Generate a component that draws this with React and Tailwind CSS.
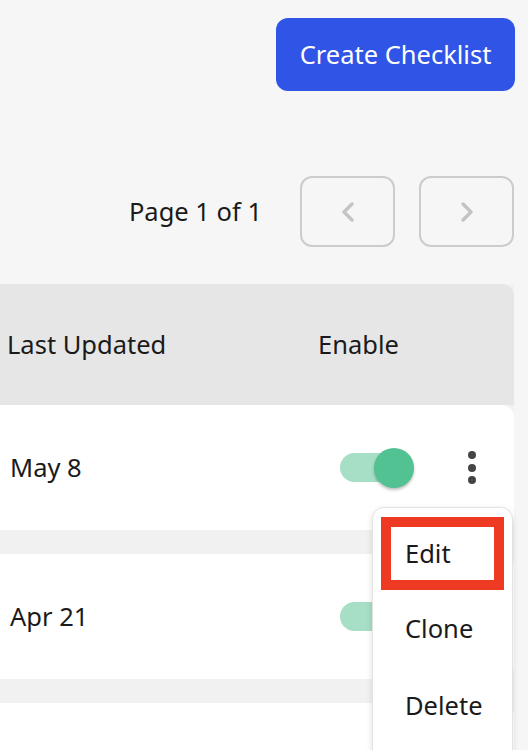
import React from 'react';

const Toggle = () => (
  <div className="relative w-[74px] h-[40px] flex items-center">
    <div className="w-[70px] h-[29px] rounded-full bg-[#a7dfc6]" />
    <div className="absolute left-[34px] top-0 w-[40px] h-[40px] rounded-full bg-[#52c293] shadow-[0_2px_3px_rgba(0,0,0,0.25)]" />
  </div>
);

const Kebab = () => (
  <div className="flex flex-col items-center gap-[4.5px]">
    <span className="w-[8px] h-[8px] rounded-full bg-[#454545]" />
    <span className="w-[8px] h-[8px] rounded-full bg-[#454545]" />
    <span className="w-[8px] h-[8px] rounded-full bg-[#454545]" />
  </div>
);

const Row = ({ date, last }) => (
  <div className={`flex items-center h-[125px] bg-white rounded-r-xl ${last ? '' : 'mb-[24px]'}`}>
    <div className="w-[340px] pl-[10px] text-[25.5px] text-[#1a1a1a]">{date}</div>
    {date && <Toggle />}
    {date && (
      <div className="ml-[54px]">
        <Kebab />
      </div>
    )}
  </div>
);

export default function App() {
  return (
    <div
      className="relative w-[528px] h-[750px] overflow-hidden bg-[#f6f6f6]"
      style={{ fontFamily: '"Noto Sans", sans-serif' }}
    >
      <div className="flex justify-end pt-[18px] pr-[13px]">
        <button className="w-[239px] h-[73px] rounded-xl bg-[#2f54e6] text-white text-[25.5px]">
          Create Checklist
        </button>
      </div>

      <div className="flex items-center justify-end mt-[85px] pr-[14px]">
        <span className="text-[25.5px] text-[#1a1a1a] mr-[38px]">Page 1 of 1</span>
        <button className="w-[95px] h-[71px] rounded-xl border-2 border-[#cccccc] flex items-center justify-center text-[#c4c4c4]">
          <svg width="18" height="24" viewBox="0 0 18 24" fill="none" stroke="currentColor" strokeWidth="3.5" strokeLinecap="round" strokeLinejoin="round">
            <path d="M13 4 L5 12 L13 20" />
          </svg>
        </button>
        <button className="ml-[24px] w-[95px] h-[71px] rounded-xl border-2 border-[#cccccc] flex items-center justify-center text-[#c4c4c4]">
          <svg width="18" height="24" viewBox="0 0 18 24" fill="none" stroke="currentColor" strokeWidth="3.5" strokeLinecap="round" strokeLinejoin="round">
            <path d="M5 4 L13 12 L5 20" />
          </svg>
        </button>
      </div>

      <div className="mt-[37px] mr-[14px] bg-[#f1f1f1]">
        <div className="flex items-center h-[121px] bg-[#e6e6e6] rounded-tr-xl text-[25.5px] text-[#1a1a1a]">
          <div className="w-[318px] pl-[7px]">Last Updated</div>
          <div>Enable</div>
        </div>
        <Row date="May 8" />
        <Row date="Apr 21" />
        <Row date="" last />
      </div>

      <div className="absolute left-[372px] top-[507px] w-[141px] h-[260px] bg-white rounded-xl border border-[#e3e3e3] shadow-[0_2px_6px_rgba(0,0,0,0.12)] pt-[9px] text-[25.5px] text-[#1a1a1a]">
        <div className="mx-[8px] h-[73px] border-[10px] border-[#ee3a22] flex items-center pl-[14px]">Edit</div>
        <div className="h-[77px] flex items-center pl-[32px]">Clone</div>
        <div className="h-[77px] flex items-center pl-[32px]">Delete</div>
      </div>
    </div>
  );
}
